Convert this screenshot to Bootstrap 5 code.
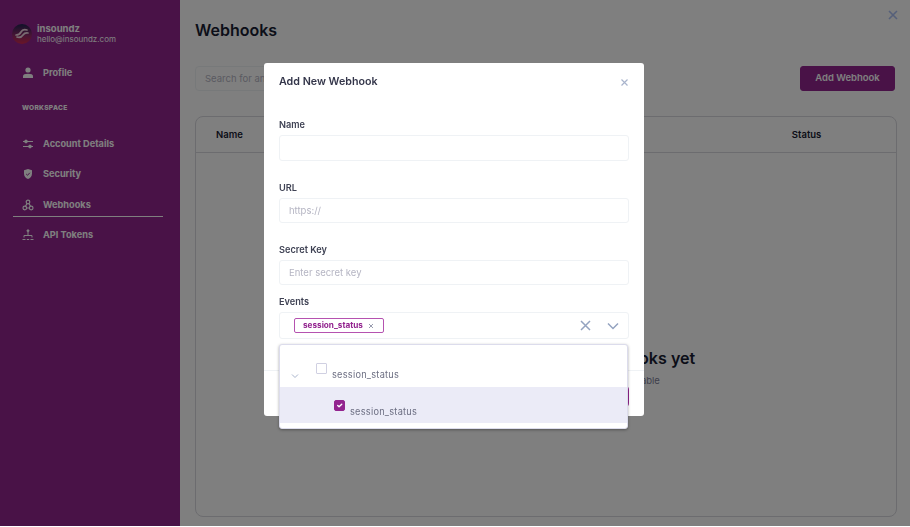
<!DOCTYPE html>
<html lang="en">
<head>
  <meta charset="UTF-8">
  <meta name="viewport" content="width=device-width, initial-scale=1">
  <title>Webhooks</title>
  <link href="https://cdn.jsdelivr.net/npm/bootstrap@5.3.3/dist/css/bootstrap.min.css" rel="stylesheet">
  <style>
    :root {
      --roxo: #93248f;
      --tinta: #3f4254;
      --claro: #b5b5c3;
      --linha: #eff2f5;
    }

    html, body {
      height: 527px;
      overflow: hidden;
      background: #fff;
      font-family: Inter, "Open Sans", sans-serif;
    }

    .app-shell {
      height: 526px;
    }

    .side-bar {
      width: 180px;
      background: var(--roxo);
      color: #fff;
      padding: 23px 17px 0 13px;
    }

    .side-user {
      gap: 5px;
      margin-left: -1px;
      margin-bottom: 13px;
    }

    .side-user b {
      display: block;
      font-size: 9.5px;
      line-height: 11px;
      font-weight: 700;
    }

    .side-user span {
      display: block;
      font-size: 8px;
      line-height: 11px;
    }

    .side-link {
      height: 30.5px;
      padding-left: 9px;
      gap: 9px;
      font-size: 9.2px;
      font-weight: 700;
      color: #fff;
      text-decoration: none;
    }

    .side-link.is-on {
      border-bottom: 1px solid #fff;
      height: 26px;
      margin-top: 1px;
      margin-bottom: 3px;
      padding-top: 4px;
    }

    .side-title {
      font-size: 6.6px;
      font-weight: 800;
      letter-spacing: .3px;
      margin: 14px 0 16px 9px;
      line-height: 10px;
    }

    .main-area {
      padding: 19px 13px 9px 15px;
      min-width: 0;
    }

    .page-title {
      font-size: 16px;
      font-weight: 600;
      color: #181c32;
      line-height: 22px;
      margin-bottom: 25px;
    }

    .search-box {
      width: 190px;
      height: 25px;
      font-size: 9.5px;
      border: 1px solid var(--linha);
      border-radius: 4px;
      padding: 0 9px;
    }

    .search-box::placeholder, .hook-input::placeholder {
      color: var(--claro);
    }

    .add-hook {
      width: 95px;
      height: 25px;
      margin-right: 2px;
      padding: 0;
      font-size: 9.5px;
      font-weight: 600;
      border-radius: 3px;
      background: var(--roxo);
      border-color: var(--roxo);
      color: #fff;
    }

    .hook-table {
      margin-top: 25px;
      height: 401px;
      border: 1px solid #d8d8de;
      border-radius: 8px;
    }

    .hook-head {
      height: 36px;
      border-bottom: 1px solid #d8d8de;
      font-size: 9.5px;
      font-weight: 600;
      color: #181c32;
      padding: 1px 0 0 20px;
    }

    .hook-head span:last-child {
      margin-left: 549px;
    }

    .empty-state {
      padding-top: 196px;
      text-align: center;
    }

    .empty-state h5 {
      font-size: 16.1px;
      font-weight: 600;
      margin: 0 0 6px;
      color: #181c32;
    }

    .empty-state p {
      font-size: 9.5px;
      color: #7e8299;
    }

    .top-close {
      top: 9px;
      right: 11px;
      z-index: 1060;
    }

    .modal-backdrop {
      height: 526px;
    }

    .modal-dialog.hook-dialog {
      width: 380px;
      max-width: 380px;
      margin: 63px 0 0 264px;
    }

    .hook-dialog .modal-content {
      height: 353px;
      border: 0;
      border-radius: 3px;
      padding: 0 15px;
    }

    .hook-header {
      height: 38px;
      padding-top: 1px;
      color: #34364a;
      font-size: 10.7px;
      font-weight: 600;
    }

    .hook-label {
      font-size: 9.2px;
      font-weight: 600;
      color: var(--tinta);
      line-height: 12px;
      margin: 0 0 4px;
      display: block;
    }

    .hook-input.form-control {
      height: 25px;
      font-size: 9.5px;
      border: 1px solid var(--linha);
      border-radius: 3px;
      padding: 0 9px;
      color: var(--tinta);
    }

    .hook-input.tall-input {
      height: 26px;
    }

    .gap-name {
      margin-top: 18px;
    }

    .gap-url, .gap-key {
      margin-top: 21px;
    }

    .gap-events {
      margin-top: 11px;
    }

    .events-box {
      height: 27px;
      width: 350px;
      border: 1px solid var(--linha);
      border-radius: 3px;
      padding: 0 9px 0 14px;
    }

    .event-tag {
      height: 15px;
      width: 90px;
      border: 1px solid #b552b0;
      border-radius: 2px;
      color: var(--roxo);
      font-size: 8.2px;
      font-weight: 700;
      padding-left: 8px;
      gap: 5px;
    }

    .chevron-gap {
      margin-left: 16px;
    }

    .tree-menu {
      left: 15px;
      top: 281px;
      width: 349px;
      height: 85px;
      background: #fff;
      border: 1px solid #dcdcec;
      border-radius: 3px;
      box-shadow: 0 1px 3px rgba(0,0,0,.35);
      z-index: 5;
      color: #6c6e82;
      font-size: 9.2px;
      letter-spacing: .25px;
    }

    .tree-row {
      height: 42px;
      padding: 0 0 5px 11px;
    }

    .tree-row.is-picked {
      height: 36px;
      background: #ebebf7;
      padding: 0 0 4px 54px;
    }

    .tree-row .form-check-input {
      width: 11px;
      height: 11px;
      margin: 0 5px 0 0;
      border: 1px solid #d0d0e2;
      border-radius: 1px;
      flex: none;
      position: relative;
      top: -8px;
    }

    .tree-row .form-check-input:checked {
      background-color: var(--roxo);
      border-color: var(--roxo);
      border-radius: 2px;
    }

    .tree-chevron {
      margin: 0 17px 3px 0;
    }

    .hook-foot {
      border-top: 1px solid var(--linha);
      margin: 0 -15px;
      height: 46px;
      padding: 13px 15px 0;
    }

    .hook-submit {
      width: 90px;
      height: 25px;
      padding: 0;
      font-size: 9.5px;
      background: var(--roxo);
      border-color: var(--roxo);
      color: #fff;
    }
  </style>
</head>
<body>

  <div class="app-shell d-flex">

    <!-- Sidebar -->
    <aside class="side-bar flex-shrink-0">
      <div class="side-user d-flex align-items-center">
        <svg width="20" height="20" viewBox="0 0 20 20">
          <defs>
            <linearGradient id="avatarFill" x1="0" y1="0" x2="0" y2="1">
              <stop offset="0" stop-color="#1f2350"/>
              <stop offset=".55" stop-color="#8c2a6a"/>
              <stop offset="1" stop-color="#d42a50"/>
            </linearGradient>
          </defs>
          <circle cx="10" cy="10" r="10" fill="url(#avatarFill)"/>
          <path d="M15 6c-3-1-5 0-6 2s-2 3-5 3M16 9c-3-.5-4 .5-5 2s-3 3-6 2" fill="none" stroke="#f3d9e4" stroke-width="1.700" stroke-linecap="round"/>
        </svg>
        <div>
          <b>insoundz</b>
          <span>hello@insoundz.com</span>
        </div>
      </div>

      <nav class="nav flex-column">
        <a class="side-link d-flex align-items-center" href="#">
          <svg width="12" height="12" viewBox="0 0 12 12" fill="#fff"><circle cx="6" cy="3" r="2.600"/><path d="M1 11V9.200C1 7.600 3 6.800 6 6.800s5 .8 5 2.400V11z"/></svg>
          Profile
        </a>
        <div class="side-title">WORKSPACE</div>
        <a class="side-link d-flex align-items-center" href="#">
          <svg width="12" height="12" viewBox="0 0 12 12" fill="none" stroke="#fff"><path d="M1 3.500h10M1 8.500h10"/><circle cx="4" cy="3.500" r="1.400" fill="#fff"/><circle cx="8" cy="8.500" r="1.400" fill="#fff"/></svg>
          Account Details
        </a>
        <a class="side-link d-flex align-items-center" href="#">
          <svg width="12" height="12" viewBox="0 0 12 12"><path d="M6 1l4 1.300v3.400C10 8.300 8.300 10 6 11 3.700 10 2 8.300 2 5.700V2.300z" fill="#fff"/><path d="M4.200 6l1.300 1.300 2.300-2.500" fill="none" stroke="#93248f"/></svg>
          Security
        </a>
        <a class="side-link is-on d-flex align-items-center" href="#">
          <svg width="12" height="12" viewBox="0 0 12 12" fill="none" stroke="#fff" stroke-width="1.200"><circle cx="6" cy="3" r="1.800"/><circle cx="2.800" cy="9" r="1.800"/><circle cx="9.200" cy="9" r="1.800"/><path d="M5 4.500L3.500 7.200M7 4.500l1.500 2.700M4.600 9h2.800"/></svg>
          Webhooks
        </a>
        <a class="side-link d-flex align-items-center" href="#">
          <svg width="12" height="12" viewBox="0 0 12 12" fill="none" stroke="#fff"><circle cx="6" cy="1.800" r="1" fill="#fff"/><path d="M6 3v3M2 6.500h8M2 6.500v2M10 6.500v2M.5 10.500h3M8.500 10.500h3M4.800 10.500h2.400"/></svg>
          API Tokens
        </a>
      </nav>
    </aside>

    <!-- Page behind the modal -->
    <main class="main-area flex-grow-1">
      <div class="page-title">Webhooks</div>
      <div class="d-flex justify-content-between">
        <input type="text" class="search-box" placeholder="Search for an endpoint">
        <button class="btn add-hook" type="button">Add Webhook</button>
      </div>
      <div class="hook-table">
        <div class="hook-head d-flex align-items-center">
          <span>Name</span>
          <span>Status</span>
        </div>
        <div class="empty-state">
          <h5>You have not added any webhooks yet</h5>
          <p>Add a webhook to make your events data available</p>
        </div>
      </div>
    </main>
  </div>

  <div class="modal-backdrop show"></div>

  <svg class="position-fixed top-close" width="12" height="12" viewBox="0 0 12 12"><path d="M2 2l8 8M10 2l-8 8" stroke="#56607a" stroke-width="1.600" fill="none"/></svg>

  <!-- Modal -->
  <div class="modal d-block">
    <div class="modal-dialog hook-dialog">
      <div class="modal-content position-relative">
        <div class="hook-header d-flex align-items-center justify-content-between">
          Add New Webhook
          <svg width="9" height="9" viewBox="0 0 9 9"><path d="M1.500 1.500l6 6M7.500 1.500l-6 6" stroke="#a9b4cc" stroke-width="1.200" fill="none"/></svg>
        </div>

        <label class="hook-label gap-name">Name</label>
        <input type="text" class="form-control hook-input tall-input">

        <label class="hook-label gap-url">URL</label>
        <input type="text" class="form-control hook-input" placeholder="https://">

        <label class="hook-label gap-key">Secret Key</label>
        <input type="text" class="form-control hook-input" placeholder="Enter secret key">

        <label class="hook-label gap-events">Events</label>
        <div class="events-box d-flex align-items-center">
          <span class="event-tag d-flex align-items-center">
            session_status
            <svg width="6" height="6" viewBox="0 0 6 6"><path d="M1 1l4 4M5 1L1 5" stroke="#7e8299" stroke-width=".8" fill="none"/></svg>
          </span>
          <svg class="ms-auto" width="11" height="11" viewBox="0 0 11 11"><path d="M1 1l9 9M10 1l-9 9" stroke="#94a3c0" stroke-width="1.500" fill="none"/></svg>
          <svg class="chevron-gap" width="12" height="8" viewBox="0 0 12 8"><path d="M1 1.500l5 5 5-5" stroke="#94a3c0" stroke-width="1.500" fill="none"/></svg>
        </div>

        <div class="hook-foot mt-auto d-flex justify-content-end">
          <button class="btn hook-submit" type="button">Submit</button>
        </div>

        <div class="tree-menu position-absolute">
          <div class="tree-row d-flex align-items-end">
            <svg class="tree-chevron" width="8" height="6" viewBox="0 0 8 6"><path d="M1 1.500l3 3 3-3" stroke="#a9b4cc" stroke-width="1" fill="none"/></svg>
            <input class="form-check-input" type="checkbox">
            <span>session_status</span>
          </div>
          <div class="tree-row is-picked d-flex align-items-end">
            <input class="form-check-input" type="checkbox" checked>
            <span>session_status</span>
          </div>
        </div>
      </div>
    </div>
  </div>

  <script src="https://cdn.jsdelivr.net/npm/bootstrap@5.3.3/dist/js/bootstrap.bundle.min.js"></script>
</body>
</html>
